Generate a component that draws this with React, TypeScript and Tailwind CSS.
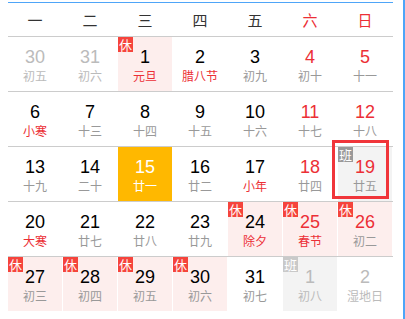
import type { ReactNode } from 'react'

type Day = {
  n: number
  lunar: string
  other?: boolean
  weekend?: boolean
  festival?: boolean
  rest?: boolean
  work?: boolean
  today?: boolean
  selected?: boolean
}

const weeks: Day[][] = [
  [
    { n: 30, lunar: '初五', other: true },
    { n: 31, lunar: '初六', other: true },
    { n: 1, lunar: '元旦', festival: true, rest: true },
    { n: 2, lunar: '腊八节', festival: true },
    { n: 3, lunar: '初九' },
    { n: 4, lunar: '初十', weekend: true },
    { n: 5, lunar: '十一', weekend: true },
  ],
  [
    { n: 6, lunar: '小寒', festival: true },
    { n: 7, lunar: '十三' },
    { n: 8, lunar: '十四' },
    { n: 9, lunar: '十五' },
    { n: 10, lunar: '十六' },
    { n: 11, lunar: '十七', weekend: true },
    { n: 12, lunar: '十八', weekend: true },
  ],
  [
    { n: 13, lunar: '十九' },
    { n: 14, lunar: '二十' },
    { n: 15, lunar: '廿一', today: true },
    { n: 16, lunar: '廿二' },
    { n: 17, lunar: '小年', festival: true },
    { n: 18, lunar: '廿四', weekend: true },
    { n: 19, lunar: '廿五', weekend: true, work: true, selected: true },
  ],
  [
    { n: 20, lunar: '大寒', festival: true },
    { n: 21, lunar: '廿七' },
    { n: 22, lunar: '廿八' },
    { n: 23, lunar: '廿九' },
    { n: 24, lunar: '除夕', festival: true, rest: true },
    { n: 25, lunar: '春节', festival: true, rest: true, weekend: true },
    { n: 26, lunar: '初二', rest: true, weekend: true },
  ],
  [
    { n: 27, lunar: '初三', rest: true },
    { n: 28, lunar: '初四', rest: true },
    { n: 29, lunar: '初五', rest: true },
    { n: 30, lunar: '初六', rest: true },
    { n: 31, lunar: '初七' },
    { n: 1, lunar: '初八', other: true, work: true },
    { n: 2, lunar: '湿地日', other: true },
  ],
]

const heads = ['一', '二', '三', '四', '五', '六', '日']

function Badge({ children, className }: { children: ReactNode; className: string }) {
  return (
    <span className={`absolute left-0 top-0 w-[15px] h-[15px] flex items-center justify-center text-[13px] leading-none text-white ${className}`}>
      {children}
    </span>
  )
}

function Cell({ d }: { d: Day }) {
  let bg = 'bg-white'
  if (d.today) bg = 'bg-[#ffb800]'
  else if (d.rest) bg = 'bg-[#fdeeed]'
  else if (d.work) bg = 'bg-[#f3f3f3]'

  let numColor = 'text-black'
  let lunarColor = 'text-[#999]'
  if (d.today) {
    numColor = 'text-white'
    lunarColor = 'text-white'
  } else if (d.other) {
    numColor = 'text-[#bbb]'
    lunarColor = 'text-[#bbb]'
  } else {
    if (d.weekend) numColor = 'text-[#ec2f36]'
    if (d.festival) lunarColor = 'text-[#ec2f36]'
  }

  return (
    <div className={`relative h-[54px] flex flex-col items-center pt-[10px] ${bg}`}>
      {d.rest && <Badge className="bg-[#f5443c]">休</Badge>}
      {d.work && <Badge className={d.other ? 'bg-[#c9c9c9]' : 'bg-[#999]'}>班</Badge>}
      <span className={`text-[18px] leading-[20px] font-['Liberation_Sans',Arial,sans-serif] ${numColor}`}>{d.n}</span>
      <span className={`mt-[1px] text-[12px] leading-[16px] ${lunarColor}`}>{d.lunar}</span>
      {d.selected && (
        <div className="absolute left-[-6px] top-[-7px] w-[57px] h-[59px] border-[3px] border-[#f0353a]" />
      )}
    </div>
  )
}

export default function App() {
  return (
    <div className="w-[405px] h-[319px] bg-white flex font-['Noto_Sans_CJK_SC',sans-serif]">
      <div className="w-[8px]" />
      <div className="w-[385px] pt-[2px]">
        <div className="border-t border-[#4ea5f8]">
          <div className="grid grid-cols-7 h-[33px] items-center">
            {heads.map((h, i) => (
              <div key={h} className={`text-center text-[15px] leading-none pr-[1px] ${i >= 5 ? 'text-[#ec2f36]' : 'text-[#333]'}`}>
                {h}
              </div>
            ))}
          </div>
          {weeks.map((w, wi) => (
            <div key={wi} className="border-t border-[#cccccc] grid grid-cols-7 gap-x-[1px] pr-[1px]">
              {w.map((d, di) => (
                <Cell key={di} d={d} />
              ))}
            </div>
          ))}
        </div>
      </div>
      <div className="flex-1 border-r-2 border-[#4ea5f8]" />
    </div>
  )
}
